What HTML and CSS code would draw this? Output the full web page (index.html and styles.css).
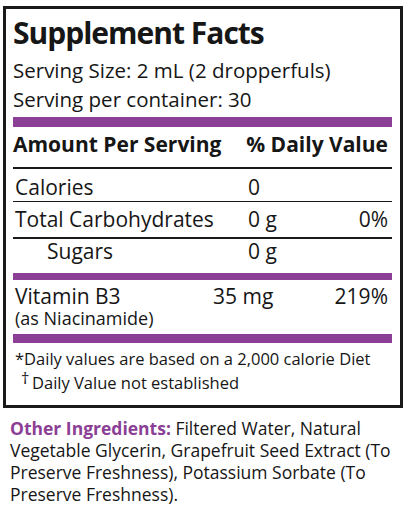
FILE: index.html
```html
<!DOCTYPE html>
<html lang="en">
<head>
  <meta charset="UTF-8" />
  <title>Supplement Facts</title>
  <link rel="stylesheet" href="styles.css">
</head>
<body>

  <div class="facts">
    <h1 class="title">Supplement Facts</h1>
    <div class="serving">Serving Size: 2 mL (2 dropperfuls)</div>
    <div class="serving">Serving per container: 30</div>
    <div class="bar top"></div>

    <div class="row head">
      <span class="name">Amount Per Serving</span>
      <span class="dv">% Daily Value</span>
    </div>
    <div class="rule heavy"></div>

    <div class="row calories">
      <span class="name">Calories</span>
      <span class="amt">0</span>
      <span class="dv"></span>
    </div>
    <div class="rule"></div>

    <div class="row carbs">
      <span class="name">Total Carbohydrates</span>
      <span class="amt">0 g</span>
      <span class="dv">0%</span>
    </div>
    <div class="rule heavy"></div>

    <div class="row sugars">
      <span class="name sub">Sugars</span>
      <span class="amt">0 g</span>
      <span class="dv"></span>
    </div>
    <div class="bar"></div>

    <div class="row vitamin">
      <span class="name">Vitamin B3<small>(as Niacinamide)</small></span>
      <span class="amt">35 mg</span>
      <span class="dv">219%</span>
    </div>
    <div class="bar bottom"></div>

    <div class="note first">*Daily values are based on a 2,000 calorie Diet</div>
    <div class="note dagger"><span class="mark">&dagger;</span>Daily Value not established</div>
  </div>

  <p class="other"><b>Other Ingredients:</b> Filtered Water, Natural Vegetable Glycerin, Grapefruit Seed Extract (To Preserve Freshness), Potassium Sorbate (To Preserve Freshness).</p>

</body>
</html>
```

FILE: styles.css
```css
* {
  box-sizing: border-box;
}

body {
  margin: 0;
  background: white;
  color: #161616;
  font-family: "Open Sans", "Noto Sans", sans-serif;
}

.facts {
  width: 400px;
  margin: 6px 0 0 3px;
  border: 3px solid #1a1a1a;
  padding: 0 8px 10px 7px;
}

.title {
  margin: 0;
  font-size: 30px;
  font-weight: 700;
  letter-spacing: -1px;
  line-height: 47px;
}

.serving {
  font-size: 20.5px;
  line-height: 29px;
}

.bar {
  height: 7px;
  background: #8b3f95;
}

.bar.top {
  height: 10px;
  margin-top: 3px;
}

.bar.bottom {
  height: 9px;
}

.row {
  display: grid;
  grid-template-columns: 233px 1fr auto;
  font-size: 21px;
  line-height: 24px;
  padding: 0 4px 0 2px;
}

.row.head {
  grid-template-columns: 1fr auto;
  font-weight: 700;
  padding: 5px 4px 11px 0;
}

.row.calories {
  padding-top: 6px;
  padding-bottom: 2px;
}

.row.carbs {
  padding-top: 5px;
  padding-bottom: 6px;
}

.row.sugars {
  padding-bottom: 10px;
}

.row.vitamin {
  padding-top: 4px;
  padding-bottom: 6px;
}

.name small {
  display: block;
  font-size: 18px;
  line-height: 20px;
}

.name.sub {
  padding-left: 32px;
}

.dv {
  text-align: right;
}

.row.vitamin .amt {
  margin-left: -35px;
}

.rule {
  height: 1px;
  background: #1a1a1a;
}

.rule.heavy {
  height: 2px;
}

.note {
  font-size: 16.5px;
  line-height: 24px;
  padding-left: 2px;
}

.note.first {
  padding-top: 4px;
}

.note.dagger {
  padding-left: 8px;
}

.mark {
  display: inline-block;
  width: 11px;
  vertical-align: 5px;
  line-height: 0;
}

.other {
  margin: 9px 0 0 10px;
  width: 392px;
  font-size: 17.5px;
  line-height: 22px;
}

.other b {
  color: #8b3f95;
}
```
